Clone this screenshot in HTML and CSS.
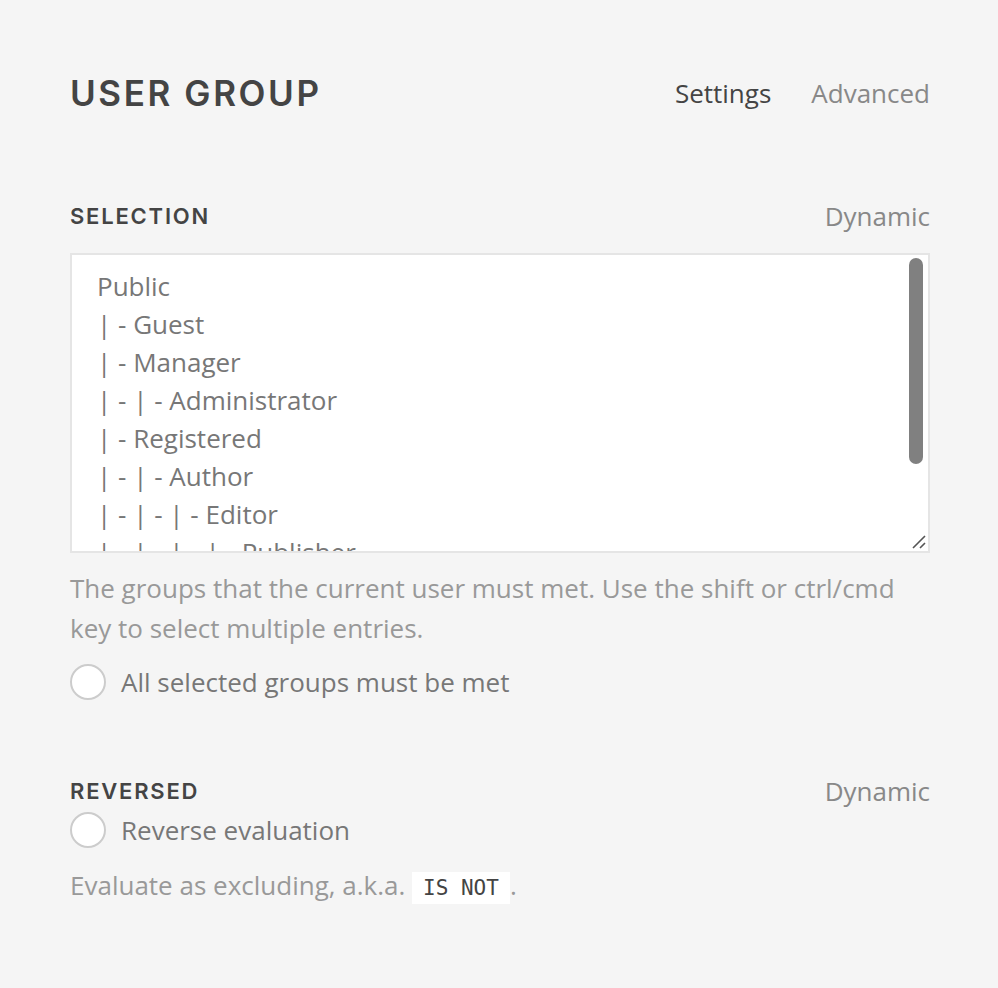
FILE: index.html
```html
<!DOCTYPE html>
<html lang="en">
<head>
<meta charset="utf-8">
<title>User Group</title>
<link rel="stylesheet" href="styles.css">
</head>
<body>
<div class="panel">
  <header class="head">
    <h1 class="title">USER GROUP</h1>
    <nav class="tabs">
      <span class="tab active">Settings</span>
      <span class="tab">Advanced</span>
    </nav>
  </header>

  <section class="field first">
    <div class="field-head">
      <h2 class="label">SELECTION</h2>
      <span class="dyn">Dynamic</span>
    </div>
    <div class="select">
      <ul class="options">
        <li>Public</li>
        <li>| - Guest</li>
        <li>| - Manager</li>
        <li>| - | - Administrator</li>
        <li>| - Registered</li>
        <li>| - | - Author</li>
        <li>| - | - | - Editor</li>
        <li>| - | - | - | - Publisher</li>
        <li>| - Super Users</li>
      </ul>
      <span class="thumb"></span>
      <svg class="grip" width="14" height="14" viewBox="0 0 14 14"><path d="M1 13 L13 1 M8 13 L13 8" stroke="#555" stroke-width="1.6" fill="none"/></svg>
    </div>
    <p class="help">The groups that the current user must met. Use the shift or ctrl/cmd key to select multiple entries.</p>
    <label class="check"><span class="box"></span><span>All selected groups must be met</span></label>
  </section>

  <section class="field second">
    <div class="field-head">
      <h2 class="label">REVERSED</h2>
      <span class="dyn">Dynamic</span>
    </div>
    <label class="check tight"><span class="box"></span><span>Reverse evaluation</span></label>
    <p class="help last">Evaluate as excluding, a.k.a. <code class="code">IS NOT</code>.</p>
  </section>
</div>
</body>
</html>
```

FILE: styles.css
```css
html, body {
  margin: 0;
  padding: 0;
  background: #f5f5f5;
}
body {
  font-family: "Open Sans", "Noto Sans", sans-serif;
  color: #777;
  font-size: 26px;
}
.panel {
  width: 860px;
  padding: 65px 68px 0 70px;
}
.head {
  display: flex;
  justify-content: space-between;
  align-items: center;
  height: 56px;
}
.title {
  margin: 0;
  font-family: "Inter", sans-serif;
  font-weight: 600;
  font-size: 35px;
  letter-spacing: 2.6px;
  color: #444;
}
.tabs {
  display: flex;
  gap: 40px;
}
.tab {
  color: #888;
}
.tab.active {
  color: #444;
}
.field.first {
  margin-top: 78px;
}
.field.second {
  margin-top: 72px;
}
.field-head {
  display: flex;
  justify-content: space-between;
  align-items: center;
  height: 34px;
}
.label {
  margin: 0;
  font-family: "Inter", sans-serif;
  font-weight: 600;
  font-size: 22px;
  letter-spacing: 1.8px;
  color: #444;
}
.dyn {
  color: #888;
}
.select {
  position: relative;
  margin-top: 20px;
  height: 296px;
  background: #fff;
  border: 2px solid #e5e5e5;
  overflow: hidden;
}
.options {
  list-style: none;
  margin: 0;
  padding: 12px 25px;
}
.options li {
  line-height: 38px;
  height: 38px;
  white-space: nowrap;
}
.thumb {
  position: absolute;
  right: 5px;
  top: 3px;
  width: 14px;
  height: 206px;
  border-radius: 7px;
  background: #808080;
}
.grip {
  position: absolute;
  right: 2px;
  bottom: 2px;
}
.help {
  margin: 15px 0 0;
  line-height: 40px;
  color: #999;
}
.check {
  display: flex;
  align-items: center;
  gap: 15px;
  margin-top: 14px;
  height: 40px;
}
.check.tight {
  margin-top: 2px;
}
.box {
  width: 32px;
  height: 32px;
  border-radius: 50%;
  border: 2px solid #ccc;
  background: #fff;
  flex: none;
}
.help.last {
  margin-top: 15px;
}
.code {
  font-family: "DejaVu Sans Mono", monospace;
  font-size: 21px;
  color: #444;
  background: #fff;
  padding: 4px 11px;
}
```
